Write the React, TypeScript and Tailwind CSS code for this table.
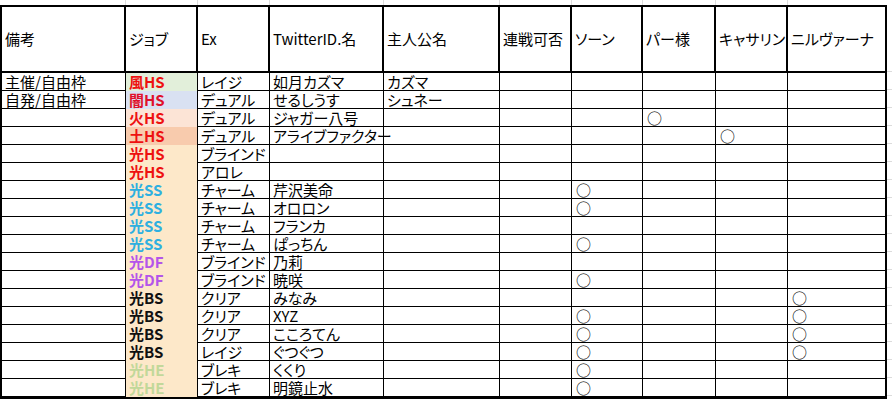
import React from "react";

const widths = [124, 72, 72, 114, 116, 72, 71, 73, 72, 97];
const headers = ["備考", "ジョブ", "Ex", "TwitterID.名", "主人公名", "連戦可否", "ソーン", "パー様", "キャサリン", "ニルヴァーナ"];

type Row = {
  note: string;
  job: string;
  jobColor: string;
  jobBg: string;
  ex: string;
  tw: string;
  hero: string;
  marks: number[]; // column indexes with ○
};

const HS = "text-[#ee1111]";
const SS = "text-[#2fb0e0]";
const DF = "text-[#b455ea]";
const BS = "text-[#111111]";
const HE = "text-[#c2d89a]";
const PEACH = "bg-[#fde8c9]";

const rows: Row[] = [
  { note: "主催/自由枠", job: "風HS", jobColor: HS, jobBg: "bg-[#e2efda]", ex: "レイジ", tw: "如月カズマ", hero: "カズマ", marks: [] },
  { note: "自発/自由枠", job: "闇HS", jobColor: "text-[#e0102a]", jobBg: "bg-[#d9e1f2]", ex: "デュアル", tw: "せるしうす", hero: "シュネー", marks: [] },
  { note: "", job: "火HS", jobColor: HS, jobBg: "bg-[#fce4d6]", ex: "デュアル", tw: "ジャガー八号", hero: "", marks: [7] },
  { note: "", job: "土HS", jobColor: HS, jobBg: "bg-[#f8cbad]", ex: "デュアル", tw: "アライブファクター", hero: "", marks: [8] },
  { note: "", job: "光HS", jobColor: HS, jobBg: PEACH, ex: "ブラインド", tw: "", hero: "", marks: [] },
  { note: "", job: "光HS", jobColor: HS, jobBg: PEACH, ex: "アロレ", tw: "", hero: "", marks: [] },
  { note: "", job: "光SS", jobColor: SS, jobBg: PEACH, ex: "チャーム", tw: "芹沢美命", hero: "", marks: [6] },
  { note: "", job: "光SS", jobColor: SS, jobBg: PEACH, ex: "チャーム", tw: "オロロン", hero: "", marks: [6] },
  { note: "", job: "光SS", jobColor: SS, jobBg: PEACH, ex: "チャーム", tw: "フランカ", hero: "", marks: [] },
  { note: "", job: "光SS", jobColor: SS, jobBg: PEACH, ex: "チャーム", tw: "ぱっちん", hero: "", marks: [6] },
  { note: "", job: "光DF", jobColor: DF, jobBg: PEACH, ex: "ブラインド", tw: "乃莉", hero: "", marks: [] },
  { note: "", job: "光DF", jobColor: DF, jobBg: PEACH, ex: "ブラインド", tw: "暁咲", hero: "", marks: [6] },
  { note: "", job: "光BS", jobColor: BS, jobBg: PEACH, ex: "クリア", tw: "みなみ", hero: "", marks: [9] },
  { note: "", job: "光BS", jobColor: BS, jobBg: PEACH, ex: "クリア", tw: "XYZ", hero: "", marks: [6, 9] },
  { note: "", job: "光BS", jobColor: BS, jobBg: PEACH, ex: "クリア", tw: "こころてん", hero: "", marks: [6, 9] },
  { note: "", job: "光BS", jobColor: BS, jobBg: PEACH, ex: "レイジ", tw: "ぐつぐつ", hero: "", marks: [6, 9] },
  { note: "", job: "光HE", jobColor: HE, jobBg: PEACH, ex: "ブレキ", tw: "くくり", hero: "", marks: [6] },
  { note: "", job: "光HE", jobColor: HE, jobBg: PEACH, ex: "ブレキ", tw: "明鏡止水", hero: "", marks: [6] },
];

export default function App() {
  return (
    <div className="w-[892px] h-[400px] bg-white overflow-hidden flex text-black font-['Noto_Sans_CJK_JP','Noto_Sans',sans-serif] text-[15px] [font-feature-settings:'palt']">
      <div className="w-[887px] flex flex-col shrink-0">
        {/* faint spreadsheet gridlines above the table */}
        <div className="h-[5px] flex pl-[2px]">
          {widths.map((w, i) => (
            <div
              key={i}
              style={{ width: w }}
              className={i < widths.length - 1 ? "h-full border-r border-[#dcdcdc]" : "h-full"}
            />
          ))}
        </div>
        <div className="border-2 border-black flex flex-col">
          {/* header */}
          <div className="flex h-[66px] border-b-2 border-black">
            {headers.map((h, i) => (
              <div
                key={i}
                style={{ width: widths[i] }}
                className={`shrink-0 flex items-center pl-[3px] whitespace-nowrap overflow-visible leading-[16px] ${
                  i < headers.length - 1 ? "border-r-2 border-black" : ""
                }`}
              >
                {h}
              </div>
            ))}
          </div>
          {/* body */}
          {rows.map((r, ri) => {
            const cells: React.ReactNode[] = [r.note, r.job, r.ex, r.tw, r.hero, "", "", "", "", ""];
            return (
              <div key={ri} className="flex h-[18px]">
                {cells.map((c, ci) => {
                  const isJob = ci === 1;
                  const mark = r.marks.includes(ci);
                  return (
                    <div
                      key={ci}
                      style={{ width: widths[ci] }}
                      className={`shrink-0 flex items-end whitespace-nowrap leading-[16px] ${
                        ci < cells.length - 1 ? "border-r border-black" : ""
                      } ${
                        isJob
                          ? `${r.jobBg} font-bold ${r.jobColor} pl-[3px] pb-[1px]`
                          : "border-b border-black pl-[3px]"
                      }`}
                    >
                      {mark ? <span className="pl-[1px]">○</span> : c}
                    </div>
                  );
                })}
              </div>
            );
          })}
        </div>
      </div>
      {/* faint gridlines to the right */}
      <div className="flex-1 flex flex-col">
        <div className="h-[72px] border-b border-[#dcdcdc] shrink-0" />
        {rows.map((_, i) => (
          <div key={i} className="h-[18px] border-b border-[#dcdcdc] shrink-0" />
        ))}
      </div>
    </div>
  );
}
